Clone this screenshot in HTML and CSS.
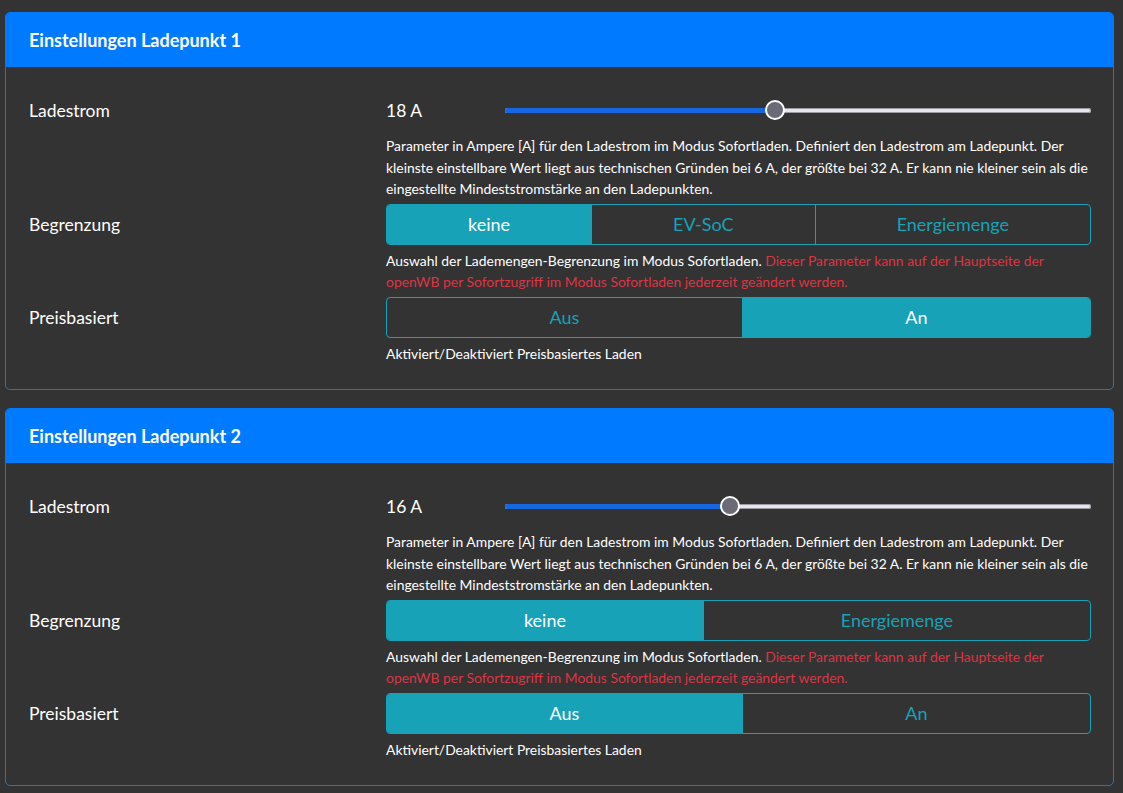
FILE: index.html
```html
<!DOCTYPE html>
<html lang="de">
<head>
    <meta charset="UTF-8">
    <meta name="viewport" content="width=device-width, initial-scale=1.0">
    <title>Sofortladen</title>
    <link rel="stylesheet" href="styles.css">
</head>
<body>
    <div class="page">
        <div class="card">
            <div class="card-header">Einstellungen Ladepunkt 1</div>
            <div class="card-body">
                <div class="setting">
                    <div class="label">Ladestrom</div>
                    <div class="range-control">
                        <span class="value">18 A</span>
                        <div class="slider">
                            <div class="fill" style="width: 46.15%"></div>
                            <div class="thumb" style="left: 46.15%"></div>
                        </div>
                    </div>
                    <div class="help">Parameter in Ampere [A] für den Ladestrom im Modus Sofortladen. Definiert den Ladestrom am Ladepunkt. Der kleinste einstellbare Wert liegt aus technischen Gründen bei 6 A, der größte bei 32 A. Er kann nie kleiner sein als die eingestellte Mindeststromstärke an den Ladepunkten.</div>
                </div>
                <div class="setting">
                    <div class="label">Begrenzung</div>
                    <div class="btn-group">
                        <button class="btn active">keine</button>
                        <button class="btn">EV-SoC</button>
                        <button class="btn">Energiemenge</button>
                    </div>
                    <div class="help">Auswahl der Lademengen-Begrenzung im Modus Sofortladen. <span class="note">Dieser Parameter kann auf der Hauptseite der openWB per Sofortzugriff im Modus Sofortladen jederzeit geändert werden.</span></div>
                </div>
                <div class="setting">
                    <div class="label">Preisbasiert</div>
                    <div class="btn-group">
                        <button class="btn">Aus</button>
                        <button class="btn active">An</button>
                    </div>
                    <div class="help">Aktiviert/Deaktiviert Preisbasiertes Laden</div>
                </div>
            </div>
        </div>

        <div class="card">
            <div class="card-header">Einstellungen Ladepunkt 2</div>
            <div class="card-body">
                <div class="setting">
                    <div class="label">Ladestrom</div>
                    <div class="range-control">
                        <span class="value">16 A</span>
                        <div class="slider">
                            <div class="fill" style="width: 38.46%"></div>
                            <div class="thumb" style="left: 38.46%"></div>
                        </div>
                    </div>
                    <div class="help">Parameter in Ampere [A] für den Ladestrom im Modus Sofortladen. Definiert den Ladestrom am Ladepunkt. Der kleinste einstellbare Wert liegt aus technischen Gründen bei 6 A, der größte bei 32 A. Er kann nie kleiner sein als die eingestellte Mindeststromstärke an den Ladepunkten.</div>
                </div>
                <div class="setting">
                    <div class="label">Begrenzung</div>
                    <div class="btn-group">
                        <button class="btn active">keine</button>
                        <button class="btn">Energiemenge</button>
                    </div>
                    <div class="help">Auswahl der Lademengen-Begrenzung im Modus Sofortladen. <span class="note">Dieser Parameter kann auf der Hauptseite der openWB per Sofortzugriff im Modus Sofortladen jederzeit geändert werden.</span></div>
                </div>
                <div class="setting">
                    <div class="label">Preisbasiert</div>
                    <div class="btn-group">
                        <button class="btn active">Aus</button>
                        <button class="btn">An</button>
                    </div>
                    <div class="help">Aktiviert/Deaktiviert Preisbasiertes Laden</div>
                </div>
            </div>
        </div>
    </div>
</body>
</html>
```

FILE: styles.css
```css
body {
    margin: 0;
    font-family: 'Lato', 'Open Sans', sans-serif;
    color: white;
    background-color: #333333;
    overflow: hidden;
}

.page {
    padding: 12px 9px 0 5px;
}

.card {
    border: 1px solid #007bff;
    border-radius: 5px;
    margin-bottom: 18px;
    overflow: hidden;
}

.card-header {
    background: #007bff;
    height: 54px;
    padding: 0 23px;
    display: flex;
    align-items: center;
    font-size: 18px;
    font-weight: bold;
}

.card-body {
    padding: 28px 22px 21px 23px;
}

.setting {
    display: grid;
    grid-template-columns: 357px 1fr;
    align-items: center;
}

.label {
    font-size: 17.5px;
}

.range-control {
    display: flex;
    align-items: center;
    height: 30px;
}

.value {
    width: 119px;
    font-size: 17.5px;
}

.slider {
    position: relative;
    flex: 1;
    height: 5px;
    background: #e6e6ea;
    box-shadow: inset 0 0 0 1px #9a9aa2;
    border-radius: 3px;
}

.fill {
    height: 100%;
    background: #1667e0;
    border-radius: 3px 0 0 3px;
}

.thumb {
    position: absolute;
    top: 50%;
    width: 20px;
    height: 20px;
    margin: -10px 0 0 -10px;
    box-sizing: border-box;
    border-radius: 50%;
    border: 2px solid white;
    background: #6b6b78;
}

.help {
    grid-column: 2;
    font-size: 13.9px;
    line-height: 21.5px;
    margin: 10px 0 4px;
}

.setting + .setting .help {
    margin-top: 5px;
}

.note {
    color: #dc3545;
}

.btn-group {
    display: flex;
    height: 41px;
    border: 1px solid #17a2b8;
    border-radius: 4px;
    overflow: hidden;
    box-sizing: border-box;
}

.btn {
    flex: 1 1 auto;
    font-family: inherit;
    font-size: 18px;
    padding: 0;
    background: transparent;
    color: #17a2b8;
    border: none;
    border-left: 1px solid #17a2b8;
    cursor: pointer;
}

.btn:first-child {
    border-left: none;
}

.btn.active {
    background: #17a2b8;
    color: white;
}
```
